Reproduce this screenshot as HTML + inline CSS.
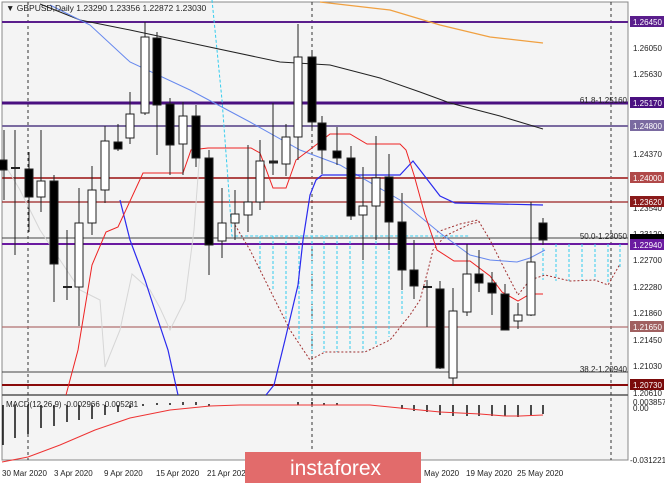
<!DOCTYPE html><html><head><style>
body{margin:0;background:#fff;}
svg{display:block;font-family:"Liberation Sans",sans-serif;}
</style></head><body>
<svg width="665" height="483" viewBox="0 0 665 483" xmlns="http://www.w3.org/2000/svg">
<rect width="665" height="483" fill="#ffffff"/>
<rect x="2" y="2" width="626" height="458" fill="#f4f4f4" stroke="#888" stroke-width="1"/>
<line x1="2" y1="395" x2="628" y2="395" stroke="#555" stroke-width="1.5"/>
<g stroke="#333" stroke-dasharray="3,3" stroke-width="1">
<line x1="28" y1="2" x2="28" y2="460"/><line x1="312" y1="2" x2="312" y2="460"/><line x1="611" y1="2" x2="611" y2="460"/>
</g>
<line x1="2" y1="22" x2="628" y2="22" stroke="#5a1e8c" stroke-width="2"/>
<line x1="2" y1="103" x2="628" y2="103" stroke="#4a1080" stroke-width="3"/>
<line x1="2" y1="126" x2="628" y2="126" stroke="#7a6aa0" stroke-width="2"/>
<line x1="2" y1="178" x2="628" y2="178" stroke="#b04848" stroke-width="2"/>
<line x1="2" y1="202" x2="628" y2="202" stroke="#9a2020" stroke-width="1.2"/>
<line x1="2" y1="238" x2="628" y2="238" stroke="#444" stroke-width="1"/>
<line x1="2" y1="244" x2="628" y2="244" stroke="#6a1aa0" stroke-width="2"/>
<line x1="2" y1="327" x2="628" y2="327" stroke="#b07070" stroke-width="1.2"/>
<line x1="2" y1="372" x2="628" y2="372" stroke="#444" stroke-width="1"/>
<line x1="2" y1="385" x2="628" y2="385" stroke="#8a0a0a" stroke-width="2"/>
<g stroke="#33ccee" stroke-dasharray="3,2" stroke-width="1" fill="none">
<polyline points="212,0 222,100 228,180 232,236 470,236"/>
<line x1="260" y1="236" x2="260" y2="270"/><line x1="273" y1="236" x2="273" y2="290"/><line x1="286" y1="236" x2="286" y2="320"/><line x1="299" y1="236" x2="299" y2="340"/><line x1="312" y1="236" x2="312" y2="355"/><line x1="324" y1="236" x2="324" y2="352"/><line x1="337" y1="236" x2="337" y2="352"/><line x1="350" y1="236" x2="350" y2="352"/><line x1="363" y1="236" x2="363" y2="352"/><line x1="376" y1="236" x2="376" y2="346"/><line x1="389" y1="236" x2="389" y2="337"/><line x1="402" y1="236" x2="402" y2="315"/>
<line x1="543" y1="248" x2="543" y2="280"/><line x1="556" y1="244" x2="556" y2="281"/><line x1="569" y1="244" x2="569" y2="281"/><line x1="582" y1="244" x2="582" y2="281"/><line x1="595" y1="244" x2="595" y2="280"/><line x1="608" y1="244" x2="608" y2="283"/><line x1="620" y1="244" x2="620" y2="268"/>
</g>
<g stroke="#a03030" stroke-dasharray="2,2" stroke-width="1" fill="none">
<polyline points="235,225 250,250 270,290 290,330 310,360 325,352 365,352 390,340 410,315 420,300 428,270 433,250 445,236 470,224 480,222"/>
<polyline points="437,232 460,224 478,220 490,240 505,270 518,295 530,280 545,275 570,281 595,280 608,285 620,264"/>
</g>
<polyline fill="none" stroke="#d6d6d6" stroke-width="1" points="2,160 20,190 40,230 60,260 80,290 100,300 105,367 120,330 132,274 150,290 160,308 170,330 185,300 194,230 200,150"/>
<polyline fill="none" stroke="#222" stroke-width="1" points="40,4 80,20 130,30 200,45 280,62 330,65 380,78 420,92 450,103 500,116 543,129"/>
<polyline fill="none" stroke="#f0a040" stroke-width="1.2" points="320,2 390,10 440,25 490,37 543,43"/>
<polyline fill="none" stroke="#6688ee" stroke-width="1" points="50,5 90,25 130,62 190,90 250,122 300,150 340,165 400,200 440,233 470,255 490,260 517,262 530,258 545,250"/>
<polyline fill="none" stroke="#2a2aee" stroke-width="1.2" points="120,200 130,240 145,280 158,320 168,350 178,395"/>
<polyline fill="none" stroke="#2a2aee" stroke-width="1.2" points="266,395 274,385 285,340 298,285 303,240 310,195 316,180 322,175 400,175 413,161 420,170 440,196 455,203 543,205"/>
<polyline fill="none" stroke="#ee2222" stroke-width="1" points="66,395 78,350 92,265 106,232 118,227 143,173 183,173 191,150 208,148 251,148 260,153 273,188 286,188 296,160 312,148 330,134 350,134 367,144 400,144 406,150 414,175 425,215 437,250 454,261 470,261 490,276 502,292 518,301 530,294 543,294"/>
<g stroke="#222" stroke-width="1">
<line x1="4" y1="130" x2="4" y2="200"/><rect x="-1" y="160" width="8" height="10" fill="#000"/>
<line x1="15" y1="130" x2="15" y2="255"/><line x1="11" y1="168" x2="20" y2="168" stroke-width="2"/>
<line x1="29" y1="152" x2="29" y2="232"/><rect x="25" y="169" width="8" height="28" fill="#000"/>
<line x1="41" y1="130" x2="41" y2="212"/><rect x="37" y="181" width="8" height="16" fill="#fff"/>
<line x1="54" y1="175" x2="54" y2="302"/><rect x="50" y="181" width="8" height="83" fill="#000"/>
<line x1="67" y1="230" x2="67" y2="300"/><line x1="63" y1="287" x2="72" y2="287" stroke-width="2"/>
<line x1="79" y1="188" x2="79" y2="326"/><rect x="75" y="223" width="8" height="64" fill="#fff"/>
<line x1="92" y1="166" x2="92" y2="235"/><rect x="88" y="190" width="8" height="33" fill="#fff"/>
<line x1="105" y1="126" x2="105" y2="203"/><rect x="101" y="141" width="8" height="49" fill="#fff"/>
<line x1="118" y1="124" x2="118" y2="151"/><rect x="114" y="142" width="8" height="7" fill="#000"/>
<line x1="130" y1="92" x2="130" y2="144"/><rect x="126" y="114" width="8" height="24" fill="#fff"/>
<line x1="145" y1="22" x2="145" y2="115"/><rect x="141" y="37" width="8" height="76" fill="#fff"/>
<line x1="157" y1="32" x2="157" y2="155"/><rect x="153" y="38" width="8" height="67" fill="#000"/>
<line x1="170" y1="98" x2="170" y2="175"/><rect x="166" y="104" width="8" height="41" fill="#000"/>
<line x1="183" y1="102" x2="183" y2="175"/><rect x="179" y="116" width="8" height="28" fill="#fff"/>
<line x1="196" y1="105" x2="196" y2="167"/><rect x="192" y="116" width="8" height="42" fill="#000"/>
<line x1="209" y1="150" x2="209" y2="275"/><rect x="205" y="158" width="8" height="87" fill="#000"/>
<line x1="222" y1="188" x2="222" y2="258"/><rect x="218" y="223" width="8" height="18" fill="#fff"/>
<line x1="235" y1="190" x2="235" y2="240"/><rect x="231" y="214" width="8" height="9" fill="#fff"/>
<line x1="248" y1="145" x2="248" y2="232"/><rect x="244" y="202" width="8" height="13" fill="#fff"/>
<line x1="260" y1="140" x2="260" y2="210"/><rect x="256" y="161" width="8" height="41" fill="#fff"/>
<line x1="273" y1="103" x2="273" y2="175"/><line x1="269" y1="162" x2="278" y2="162" stroke-width="3"/>
<line x1="286" y1="124" x2="286" y2="176"/><rect x="282" y="137" width="8" height="27" fill="#fff"/>
<line x1="298" y1="24" x2="298" y2="160"/><rect x="294" y="57" width="8" height="80" fill="#fff"/>
<line x1="312" y1="50" x2="312" y2="128"/><rect x="308" y="57" width="8" height="65" fill="#000"/>
<line x1="322" y1="116" x2="322" y2="174"/><rect x="318" y="123" width="8" height="27" fill="#000"/>
<line x1="337" y1="127" x2="337" y2="165"/><rect x="333" y="151" width="8" height="7" fill="#000"/>
<line x1="351" y1="146" x2="351" y2="220"/><rect x="347" y="158" width="8" height="58" fill="#000"/>
<line x1="363" y1="167" x2="363" y2="260"/><rect x="359" y="206" width="8" height="9" fill="#fff"/>
<line x1="376" y1="136" x2="376" y2="240"/><rect x="372" y="178" width="8" height="28" fill="#fff"/>
<line x1="389" y1="154" x2="389" y2="250"/><rect x="385" y="177" width="8" height="45" fill="#000"/>
<line x1="402" y1="193" x2="402" y2="290"/><rect x="398" y="222" width="8" height="48" fill="#000"/>
<line x1="414" y1="240" x2="414" y2="299"/><rect x="410" y="270" width="8" height="16" fill="#000"/>
<line x1="427" y1="280" x2="427" y2="327"/><line x1="423" y1="287" x2="432" y2="287" stroke-width="2"/>
<line x1="440" y1="281" x2="440" y2="369"/><rect x="436" y="289" width="8" height="79" fill="#000"/>
<line x1="453" y1="288" x2="453" y2="386"/><rect x="449" y="311" width="8" height="67" fill="#fff"/>
<line x1="467" y1="244" x2="467" y2="316"/><rect x="463" y="274" width="8" height="38" fill="#fff"/>
<line x1="479" y1="250" x2="479" y2="292"/><rect x="475" y="274" width="8" height="9" fill="#000"/>
<line x1="492" y1="272" x2="492" y2="315"/><rect x="488" y="283" width="8" height="10" fill="#000"/>
<line x1="505" y1="284" x2="505" y2="330"/><rect x="501" y="294" width="8" height="36" fill="#000"/>
<line x1="518" y1="303" x2="518" y2="329"/><rect x="514" y="315" width="8" height="6" fill="#fff"/>
<line x1="531" y1="202" x2="531" y2="316"/><rect x="527" y="262" width="8" height="53" fill="#fff"/>
<line x1="543" y1="218" x2="543" y2="245"/><rect x="539" y="223" width="8" height="17" fill="#000"/>
</g>
<g stroke="#111" stroke-width="1.5">
<line x1="3" y1="405" x2="3" y2="445"/><line x1="15" y1="405" x2="15" y2="438"/><line x1="28" y1="405" x2="28" y2="434"/><line x1="41" y1="405" x2="41" y2="428"/><line x1="54" y1="405" x2="54" y2="426"/><line x1="67" y1="405" x2="67" y2="422"/><line x1="79" y1="405" x2="79" y2="420"/><line x1="92" y1="405" x2="92" y2="419"/><line x1="105" y1="405" x2="105" y2="415"/><line x1="118" y1="405" x2="118" y2="412"/><line x1="130" y1="405" x2="130" y2="408"/>
<line x1="143" y1="404" x2="143" y2="406"/><line x1="157" y1="403" x2="157" y2="405"/><line x1="170" y1="403" x2="170" y2="405"/><line x1="183" y1="402" x2="183" y2="405"/><line x1="196" y1="402" x2="196" y2="405"/><line x1="209" y1="404" x2="209" y2="406"/><line x1="298" y1="402" x2="298" y2="405"/><line x1="312" y1="402" x2="312" y2="405"/><line x1="324" y1="403" x2="324" y2="405"/><line x1="337" y1="403" x2="337" y2="405"/>
<line x1="402" y1="405" x2="402" y2="409"/><line x1="414" y1="405" x2="414" y2="411"/><line x1="427" y1="405" x2="427" y2="412"/><line x1="440" y1="405" x2="440" y2="415"/><line x1="453" y1="405" x2="453" y2="416"/><line x1="467" y1="405" x2="467" y2="416"/><line x1="479" y1="405" x2="479" y2="416"/><line x1="492" y1="405" x2="492" y2="416"/><line x1="505" y1="405" x2="505" y2="416"/><line x1="518" y1="405" x2="518" y2="417"/><line x1="531" y1="405" x2="531" y2="415"/><line x1="543" y1="405" x2="543" y2="414"/>
</g>
<polyline fill="none" stroke="#ee3333" stroke-width="1" points="2,462 28,457 60,445 95,430 130,418 170,410 210,406 240,405 370,405 400,408 440,412 480,414 505,416 520,416 543,415"/>
<text x="6" y="407" font-size="8" fill="#222">MACD(12,26,9) -0.002966 -0.005281</text>
<text x="6" y="11" font-size="8.5" fill="#222">▼ GBPUSD,Daily  1.23290 1.23356 1.22872 1.23030</text>
<g font-size="8" fill="#222" text-anchor="end">
<text x="627" y="103">61.8-1.25160</text><text x="627" y="239">50.0-1.23050</text><text x="627" y="372">38.2-1.20940</text>
</g>
<g font-size="8" fill="#222">
<text x="633" y="51">1.26050</text><text x="633" y="77">1.25630</text><text x="633" y="157">1.24370</text><text x="633" y="211">1.23540</text><text x="633" y="237">1.23120</text><text x="633" y="263">1.22700</text><text x="633" y="290">1.22280</text><text x="633" y="316">1.21860</text><text x="633" y="343">1.21450</text><text x="633" y="369">1.21030</text><text x="633" y="396">1.20610</text>
<text x="633" y="405">0.003857</text><text x="633" y="411">0.00</text><text x="630" y="463">-0.031221</text>
</g>
<g font-size="8" fill="#fff">
<rect x="630" y="16" width="34" height="11" fill="#5a1e8c"/><text x="633" y="25">1.26450</text>
<rect x="630" y="97" width="34" height="11" fill="#4a1080"/><text x="633" y="106">1.25170</text>
<rect x="630" y="120" width="34" height="11" fill="#7a6aa0"/><text x="633" y="129">1.24800</text>
<rect x="630" y="172" width="34" height="11" fill="#b04848"/><text x="633" y="181">1.24000</text>
<rect x="630" y="196" width="34" height="11" fill="#8a1a1a"/><text x="633" y="205">1.23620</text>
<rect x="630" y="234" width="34" height="6" fill="#000"/>
<rect x="630" y="239" width="34" height="11" fill="#6a1aa0"/><text x="633" y="248">1.22940</text>
<rect x="630" y="321" width="34" height="11" fill="#a06060"/><text x="633" y="330">1.21650</text>
<rect x="630" y="379" width="34" height="11" fill="#7a0a0a"/><text x="633" y="388">1.20730</text>
</g>
<g font-size="8" fill="#222">
<text x="2" y="476">30 Mar 2020</text><text x="54" y="476">3 Apr 2020</text><text x="104" y="476">9 Apr 2020</text><text x="156" y="476">15 Apr 2020</text><text x="207" y="476">21 Apr 202</text><text x="424" y="476">May 2020</text><text x="466" y="476">19 May 2020</text><text x="517" y="476">25 May 2020</text>
</g>
<rect x="245" y="452" width="176" height="31" fill="#e26b6b"/>
<text x="290" y="475" font-size="21" fill="#fff">instaforex</text>
</svg>
</body></html>
